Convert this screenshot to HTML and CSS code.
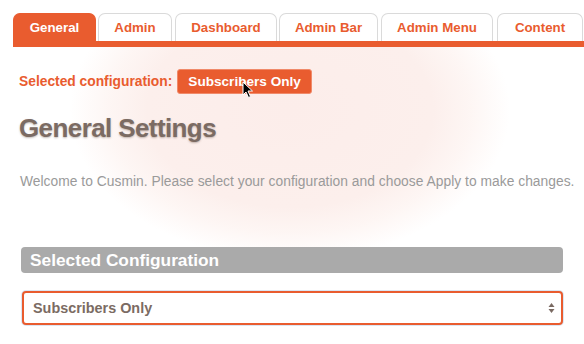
FILE: index.html
```html
<!DOCTYPE html>
<html>
<head>
<meta charset="utf-8">
<link rel="stylesheet" href="styles.css">
</head>
<body>
<div class="page">
  <div class="blob"></div>
  <nav class="tabs">
    <div class="tab active t1">General</div>
    <div class="tab t2">Admin</div>
    <div class="tab t3">Dashboard</div>
    <div class="tab t4">Admin Bar</div>
    <div class="tab t5">Admin Menu</div>
    <div class="tab t6">Content</div>
    <div class="tab t7"></div>
  </nav>
  <div class="bar"></div>
  <div class="content">
    <div class="selected">
      <span class="sel-label">Selected configuration:</span>
      <span class="sel-btn">Subscribers Only
        <svg class="cursor" width="12" height="18" viewBox="0 0 12 18"><path d="M1 1 L1 14 L4 11 L6.5 16.5 L8.5 15.5 L6 10 L10.5 10 Z" fill="#000" stroke="#fff" stroke-width="1"/></svg>
      </span>
    </div>
    <h1 class="title">General Settings</h1>
    <p class="welcome">Welcome to Cusmin. Please select your configuration and choose Apply to make changes.</p>
    <div class="section">Selected Configuration</div>
    <div class="select">
      <span>Subscribers Only</span>
      <svg class="arrows" width="7" height="12" viewBox="0 0 7 12"><path d="M3.5 1 L6.5 5 L0.5 5 Z M3.5 11 L6.5 7 L0.5 7 Z" fill="#7a6a62"/></svg>
    </div>
  </div>
</div>
</body>
</html>
```
FILE: styles.css
```css
* { box-sizing: border-box; }
html, body { margin: 0; padding: 0; background: #fff; }
body { font-family: "Liberation Sans", Arial, sans-serif; overflow: hidden; }
.page { position: relative; width: 584px; height: 344px; overflow: hidden; }
.blob {
  position: absolute;
  left: 70px; top: -40px; width: 440px; height: 300px;
  background: radial-gradient(ellipse closest-side at center, #fcedea 0%, #fcefec 65%, rgba(253,242,239,0.7) 82%, rgba(255,255,255,0) 100%);
  z-index: 0;
}
.tabs {
  position: relative; z-index: 1;
  display: flex; gap: 2px;
  padding: 13px 0 0 13px;
  white-space: nowrap;
  background: #fff;
}
.tab {
  flex: none;
  height: 28px;
  text-align: center;
  line-height: 27px;
  font-size: 13.3px; font-weight: bold;
  color: #e95c2f;
  border: 1px solid #dadada; border-bottom: none;
  border-radius: 7px 7px 0 0;
  background: #fff;
}
.tab.active { background: #e95c2f; color: #fff; border-color: #e95c2f; }
.t1 { width: 83px; }
.t2 { width: 74px; }
.t3 { width: 102px; margin-left: 1px; }
.t4 { width: 99px; }
.t5 { width: 112px; margin-left: 1px; }
.t6 { width: 86px; margin-left: 2px; }
.t7 { width: 40px; }
.bar { position: relative; z-index: 1; height: 6px; margin-left: 13px; background: #e95c2f; }
.content { position: relative; z-index: 1; padding: 22px 20px 0 19px; }
.selected { display: flex; align-items: center; height: 25px; }
.sel-label { color: #e95c2f; font-weight: bold; font-size: 13.8px; margin-right: 5px; }
.sel-btn {
  position: relative;
  background: #e95c2f; color: #fff; font-weight: bold; font-size: 13.6px;
  height: 25px; line-height: 24px; padding: 0 10px;
  border-radius: 3px; border: 1px solid #f08a6a;
}
.cursor { position: absolute; left: 64px; top: 11px; }
.title {
  margin: 19px 0 0 0;
  font-size: 26px; font-weight: bold; letter-spacing: -0.6px;
  color: #7b6b63;
  text-shadow: 0 1px 2px rgba(80,60,50,0.35);
  line-height: 30px;
}
.welcome {
  margin: 31px 0 0 1px;
  font-size: 13.8px; color: #9a9a9a; letter-spacing: 0.03px;
  line-height: 16px;
  white-space: nowrap;
}
.section {
  margin: 57px 1px 0 2px;
  height: 26px; line-height: 26px;
  background: #aaa; color: #fff;
  font-size: 17.3px; font-weight: bold;
  padding-left: 9px; border-radius: 4px;
}
.select {
  display: flex; align-items: center; justify-content: space-between;
  margin: 18px 1px 0 3px;
  height: 34px;
  border: 2px solid #e95c2f; border-radius: 4px;
  box-shadow: 0 0 0 1px #dbe6f3;
  background: #fff;
  padding: 0 6px 0 9px;
  color: #7b6b63; font-weight: bold; font-size: 14.4px;
}
```
